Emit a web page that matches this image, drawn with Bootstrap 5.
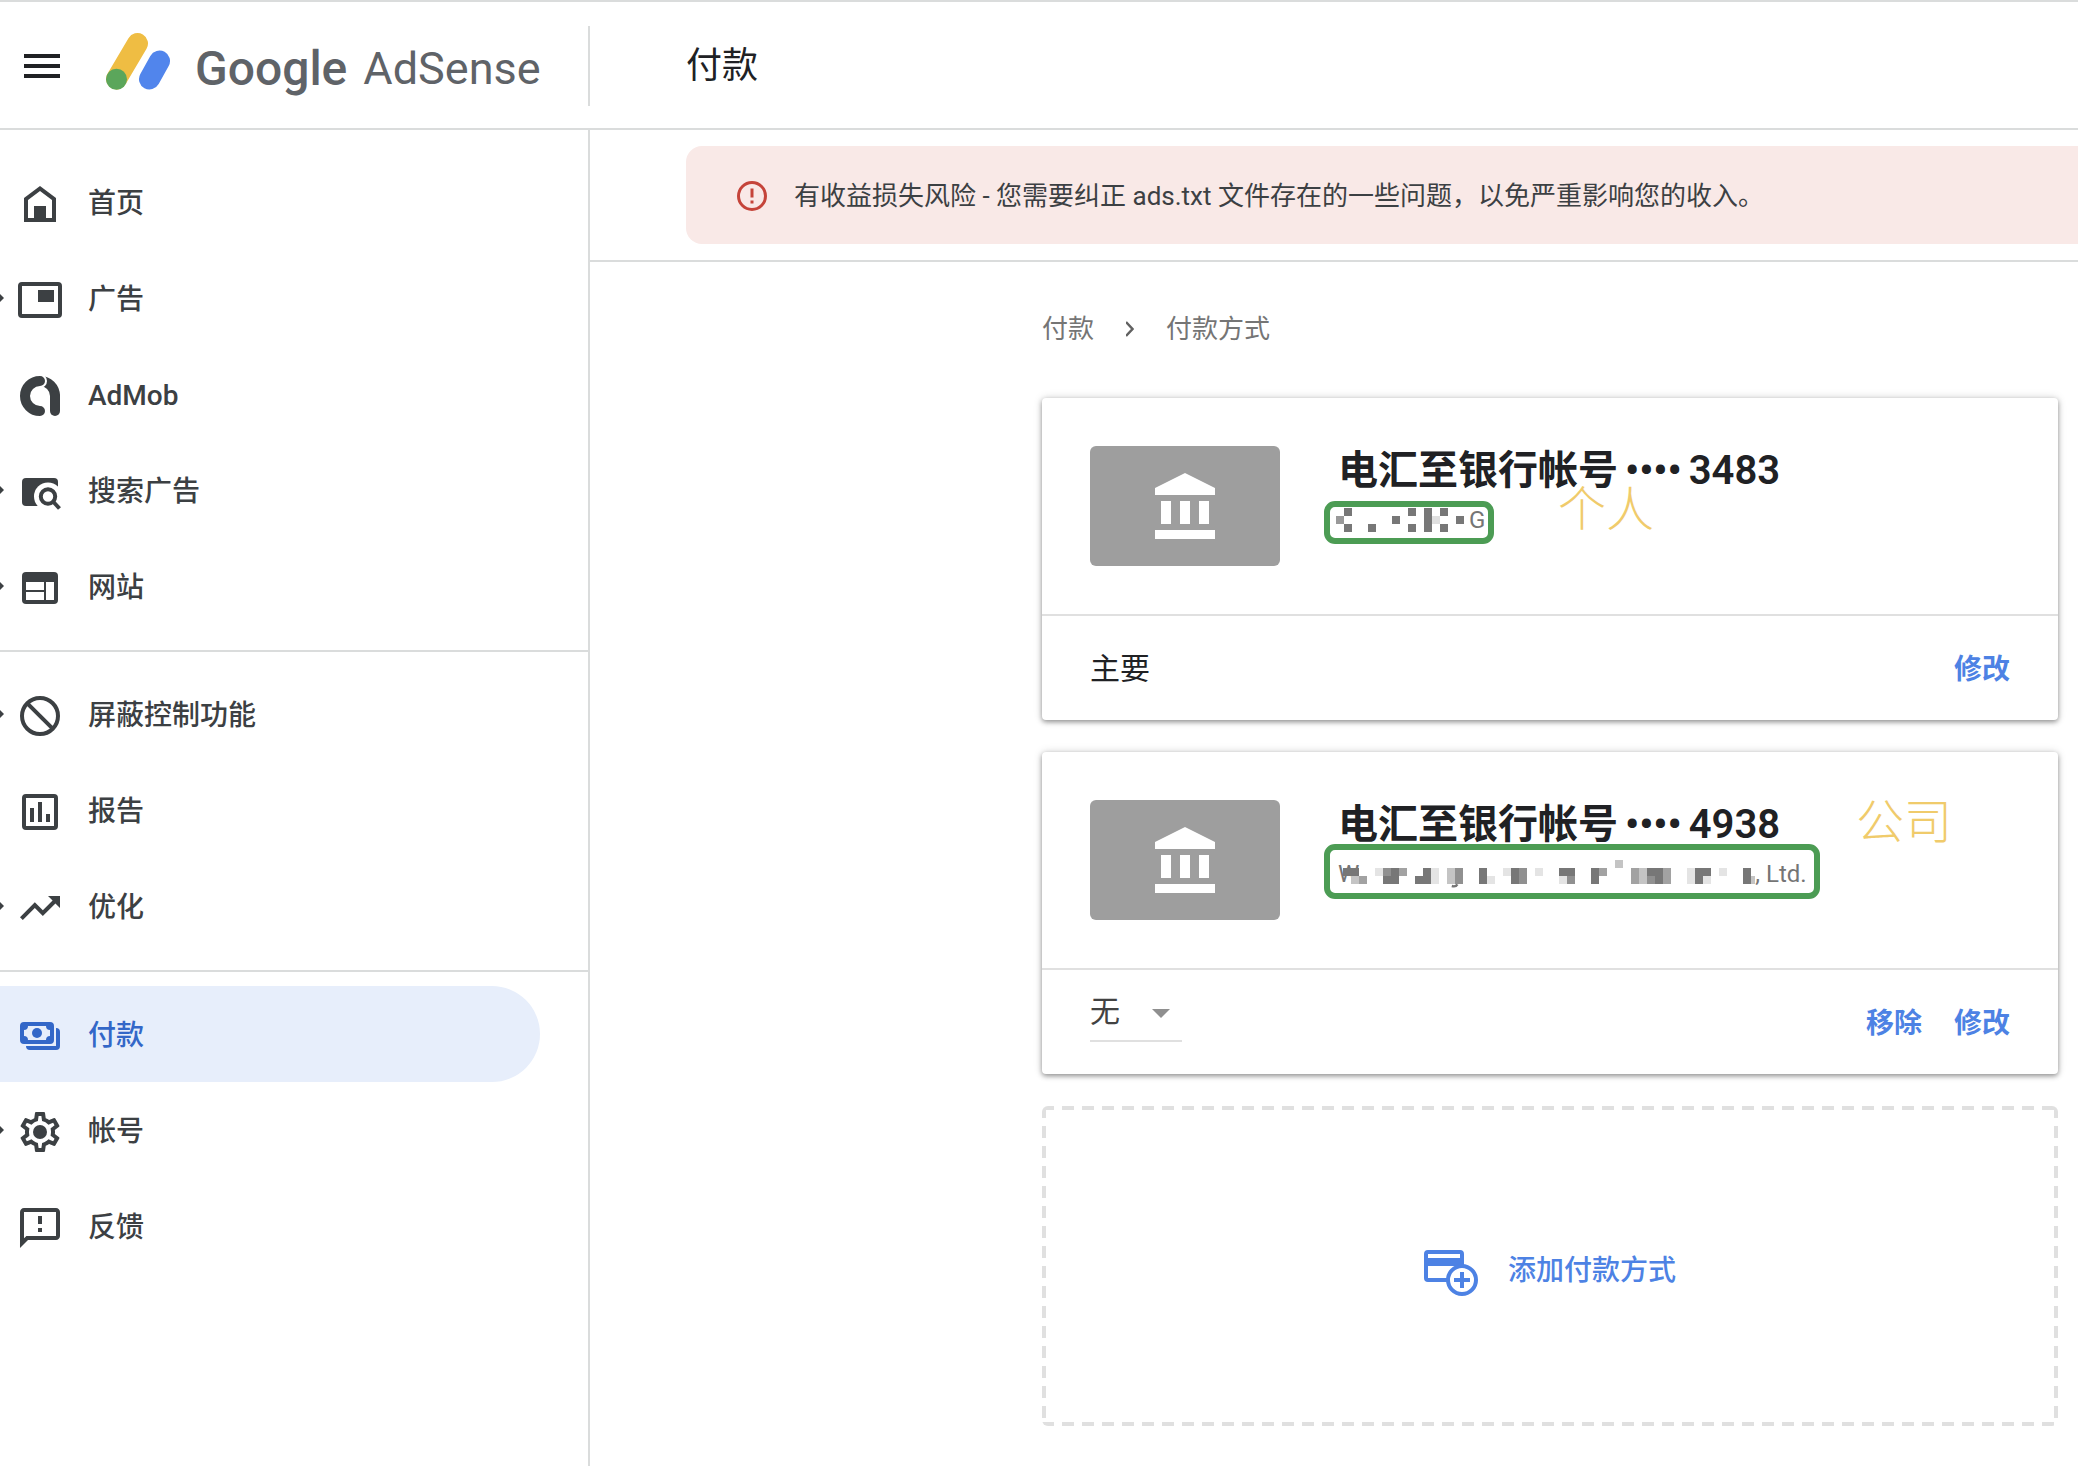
<!DOCTYPE html>
<html lang="zh-CN">
<head>
<meta charset="utf-8">
<meta name="viewport" content="width=device-width, initial-scale=1">
<title>Google AdSense - 付款</title>
<link href="https://cdn.jsdelivr.net/npm/bootstrap@5.3.0/dist/css/bootstrap.min.css" rel="stylesheet">
<style>
  :root { --line: #dadcdc; --ink: #3c4043; --link: #4d82e4; }
  body { font-family: Roboto, "Noto Sans CJK SC", sans-serif; color: #202124; background: #fff; }
  svg { display: block; flex: none; }
  a { text-decoration: none; }
  .topbar { border-top: 2px solid var(--line); border-bottom: 2px solid var(--line); height: 130px; padding-top: 2px; }
  .brand-area { width: 590px; height: 80px; border-right: 2px solid var(--line); padding-left: 24px; }
  .menu-btn { width: 36px; height: 36px; }
  .brand-link { color: #5f6368; margin-left: 45px; line-height: 60px; }
  .brand-google { font-size: 48px; font-weight: 500; padding-top: 6px; }
  .brand-product { font-size: 45px; padding-top: 6px; }
  .page-title { font-size: 36px; line-height: 48px; font-weight: 400; padding-left: 96px; }
  .side { width: 590px; border-right: 2px solid var(--line); padding-top: 10px; }
  .side-group { padding: 14px 0 16px; }
  .side-group + .side-group { border-top: 2px solid var(--line); }
  .side-link { height: 96px; margin-right: 48px; font-size: 28px; font-weight: 500; color: var(--ink); border-radius: 0 48px 48px 0; padding-left: 0; }
  .side-link svg { margin-top: 4px; }
  .side-link span { padding-top: 3px; }
  .side-link::before { content: ""; width: 16px; border: 0 solid transparent; }
  .side-link.expands::before { width: 4px; margin-right: 12px; border-width: 4px 0 4px 4px; border-left-color: var(--ink); }
  .side-link.active { background: #e7eefb; color: #3367c8; }
  .notice-row { border-bottom: 2px solid var(--line); padding: 16px 0 16px 96px; }
  .notice { background: #f9e9e7; border-radius: 16px 0 0 16px; height: 98px; padding: 2px 0 0 50px; gap: 26px; font-size: 26px; color: #3c4043; }
  .content { padding: 45px 20px 32px 452px; }
  .crumbs { font-size: 26px; line-height: 44px; gap: 32px; margin-bottom: 47px; color: #757575; }
  .crumbs a { color: inherit; }
  .pay-card { border: 0; border-radius: 4px; margin-bottom: 32px; box-shadow: 0 2px 5px rgba(0,0,0,.38), 0 0 10px rgba(0,0,0,.14); }
  .pay-main { padding: 48px; height: 216px; gap: 58px; }
  .thumb { width: 190px; height: 120px; border-radius: 6px; background: #9e9e9e; }
  .pay-name { font-size: 40px; line-height: 50px; font-weight: 600; margin: 0; gap: 7px; }
  .pay-holder { font-size: 24px; line-height: 32px; margin-top: 8px; color: #757575; height: 32px; }
  .mosaic-person { margin-left: -2px; margin-right: 5px; }
  .mosaic-company { margin-left: -16px; }
  .pay-foot { border-top: 2px solid #e0e0e0; height: 106px; padding: 0 48px; font-size: 30px; }
  .act { font-size: 28px; font-weight: 700; color: var(--link); line-height: 40px; padding-top: 3px; }
  .pref { appearance: none; border: 0; border-bottom: 2px solid #e0e0e0; border-radius: 0; width: 92px; height: 60px; padding: 0; font-size: 30px; color: #424242; background: transparent; }
  .pref-wrap svg { position: absolute; left: 62px; top: 27px; pointer-events: none; }
  .ring { position: absolute; border: 6px solid #4c9c54; border-radius: 11px; }
  .ring-person { left: 282px; top: 103px; width: 170px; height: 43px; }
  .ring-company { left: 282px; top: 92px; width: 496px; height: 55px; }
  .scribble { position: absolute; font-size: 48px; line-height: 56px; font-weight: 300; color: #f0cb6b; }
  .scribble-person { left: 516px; top: 84px; }
  .scribble-company { left: 814px; top: 43px; }
  .add-box { border: 0; border-radius: 6px; height: 320px; gap: 30px; padding-top: 10px; color: var(--link); font-size: 28px; font-weight: 500;
    --h: repeating-linear-gradient(90deg, #e0e0e0 0 12px, transparent 12px 20px);
    --v: repeating-linear-gradient(180deg, #e0e0e0 0 12px, transparent 12px 20px);
    background: var(--h) top/100% 4px no-repeat, var(--h) bottom/100% 4px no-repeat, var(--v) left/4px 100% no-repeat, var(--v) right/4px 100% no-repeat; }
</style>
<script src="https://cdn.jsdelivr.net/npm/bootstrap@5.3.0/dist/js/bootstrap.bundle.min.js"></script>
</head>
<body>
<div class="d-flex flex-column min-vh-100 overflow-hidden">
  <header class="topbar d-flex align-items-center">
    <div class="brand-area d-flex align-items-center flex-shrink-0">
      <button class="menu-btn btn p-0 border-0" type="button" aria-label="主菜单">
        <svg width="36" height="36" viewBox="0 0 36 36" fill="#202124"><path d="M0 6h36v4H0zM0 16h36v4H0zM0 26h36v4H0z"/></svg>
      </button>
      <a class="brand-link d-flex align-items-center" href="#">
        <svg class="mb-2" width="66" height="60" viewBox="105 32 66 60" fill="none" stroke-width="21" stroke-linecap="round"><path d="M137.500 43.500L116.500 79" stroke="#efbd43"/><path d="M116.500 79.200v.1" stroke="#5ba65b"/><path d="M159.500 61L149.500 79" stroke="#5185ec"/></svg>
        <span class="brand-google ms-4">Google</span><span class="brand-product ms-3">AdSense</span>
      </a>
    </div>
    <h1 class="page-title m-0">付款</h1>
  </header>

  <div class="d-flex flex-grow-1">
    <nav class="side flex-shrink-0" aria-label="主导航">
      <div class="side-group">
        <a class="side-link d-flex align-items-center" href="#">
          <svg width="48" height="48" viewBox="0 0 24 24" fill="currentColor"><path fill-rule="evenodd" d="M12 3L4 9v12h16V9zM6 10l6-4.500L18 10v9H6z"/><path d="M9 13h6v6.500H9z"/></svg>
          <span class="ms-4">首页</span></a>
        <a class="side-link expands d-flex align-items-center" href="#">
          <svg width="48" height="48" viewBox="0 0 24 24" fill="currentColor"><rect x="2" y="4" width="20" height="16" rx="1" fill="none" stroke="currentColor" stroke-width="2"/><path d="M11 7h8v6h-8z"/></svg>
          <span class="ms-4">广告</span></a>
        <a class="side-link d-flex align-items-center" href="#">
          <svg width="48" height="48" viewBox="0 0 48 48" fill="none" stroke="currentColor" stroke-width="10"><path d="M24 9a15 15 0 0 1 15 15v4"/><path d="M39 24v15" stroke-linecap="round"/><circle cx="24" cy="9" r="7" fill="#fff" stroke="none"/><path d="M19 0h11.500v4H19z" fill="#fff" stroke="none"/><path d="M24 9a15 15 0 0 0 0 30" stroke-linecap="round"/></svg>
          <span class="ms-4">AdMob</span></a>
        <a class="side-link expands d-flex align-items-center" href="#">
          <svg width="48" height="48" viewBox="0 0 48 48"><rect x="6" y="10" width="36" height="28" rx="4" fill="currentColor"/><circle cx="32" cy="28.500" r="14" fill="#fff"/><path d="M32 28h12v14H32z" fill="#fff"/><circle cx="32" cy="28.500" r="7.200" fill="none" stroke="currentColor" stroke-width="4"/><path d="M37 33.500l6.500 7" stroke="currentColor" stroke-width="4"/></svg>
          <span class="ms-4">搜索广告</span></a>
        <a class="side-link expands d-flex align-items-center" href="#">
          <svg width="48" height="48" viewBox="0 0 48 48"><rect x="6" y="8" width="36" height="32" rx="4" fill="currentColor"/><path d="M10 18h18v8H10zM10 28h18v8H10zM30 18h8v18h-8z" fill="#fff"/></svg>
          <span class="ms-4">网站</span></a>
      </div>
      <div class="side-group">
        <a class="side-link expands d-flex align-items-center" href="#">
          <svg width="48" height="48" viewBox="0 0 48 48" fill="none" stroke="currentColor" stroke-width="4"><circle cx="24" cy="24" r="18"/><path d="M11.300 11.300l25.400 25.400"/></svg>
          <span class="ms-4">屏蔽控制功能</span></a>
        <a class="side-link d-flex align-items-center" href="#">
          <svg width="48" height="48" viewBox="0 0 48 48" fill="currentColor"><rect x="8" y="8" width="32" height="32" rx="2" fill="none" stroke="currentColor" stroke-width="4"/><path d="M14 20h4v14h-4zM22 14h4v20h-4zM30 26h4v8h-4z"/></svg>
          <span class="ms-4">报告</span></a>
        <a class="side-link expands d-flex align-items-center" href="#">
          <svg width="48" height="48" viewBox="0 0 24 24" fill="currentColor"><path d="M16 6l2.290 2.290-4.880 4.880-4-4L2 16.590 3.410 18l6-6 4 4 6.300-6.290L22 12V6z"/></svg>
          <span class="ms-4">优化</span></a>
      </div>
      <div class="side-group">
        <a class="side-link active d-flex align-items-center" href="#" aria-current="page">
          <svg width="48" height="48" viewBox="0 0 48 48" fill="currentColor"><path fill-rule="evenodd" d="M8 10h26a4 4 0 0 1 4 4v14a4 4 0 0 1-4 4H8a4 4 0 0 1-4-4V14a4 4 0 0 1 4-4zM12 14a4 4 0 0 1-4 4v6a4 4 0 0 1 4 4h18a4 4 0 0 1 4-4v-6a4 4 0 0 1-4-4z"/><circle cx="21" cy="21" r="5"/><path d="M40 16a4 4 0 0 1 4 4v14a4 4 0 0 1-4 4H14a4 4 0 0 1-4-4h30z"/></svg>
          <span class="ms-4">付款</span></a>
        <a class="side-link expands d-flex align-items-center" href="#">
          <svg width="48" height="48" viewBox="0 0 24 24" fill="currentColor"><path d="M19.430 12.980c.04-.32.07-.64.07-.98 0-.34-.03-.66-.07-.98l2.110-1.650c.19-.15.24-.42.12-.64l-2-3.460c-.09-.16-.26-.25-.44-.25-.06 0-.12.01-.17.03l-2.490 1c-.52-.4-1.080-.73-1.690-.98l-.38-2.650C14.460 2.180 14.250 2 14 2h-4c-.25 0-.46.18-.49.42l-.38 2.650c-.61.25-1.170.59-1.690.98l-2.490-1c-.06-.02-.12-.03-.18-.03-.17 0-.34.09-.43.25l-2 3.460c-.13.22-.07.49.12.64l2.110 1.650c-.04.32-.07.65-.07.98 0 .33.03.66.07.98l-2.110 1.650c-.19.15-.24.42-.12.64l2 3.460c.09.16.26.25.44.25.06 0 .12-.01.17-.03l2.490-1c.52.4 1.080.73 1.690.98l.38 2.650c.03.24.24.42.49.42h4c.25 0 .46-.18.49-.42l.38-2.650c.61-.25 1.170-.59 1.690-.98l2.490 1c.06.02.12.03.18.03.17 0 .34-.09.43-.25l2-3.460c.12-.22.07-.49-.12-.64l-2.110-1.650zm-1.980-1.710c.04.31.05.52.05.73 0 .21-.02.43-.05.73l-.14 1.130.89.7 1.080.84-.7 1.210-1.270-.51-1.040-.42-.9.68c-.43.32-.84.56-1.250.73l-1.060.43-.16 1.130-.2 1.350h-1.400l-.19-1.350-.16-1.130-1.060-.43c-.43-.18-.83-.41-1.230-.71l-.91-.7-1.060.43-1.270.51-.7-1.210 1.080-.84.89-.7-.14-1.130c-.03-.31-.05-.54-.05-.74s.02-.43.05-.73l.14-1.130-.89-.7-1.080-.84.7-1.210 1.270.51 1.040.42.9-.68c.43-.32.84-.56 1.250-.73l1.060-.43.16-1.130.2-1.350h1.390l.19 1.350.16 1.130 1.060.43c.43.18.83.41 1.230.71l.91.7 1.060-.43 1.270-.51.7 1.210-1.070.85-.89.7.14 1.130z"/><circle cx="12" cy="12" r="3.500"/></svg>
          <span class="ms-4">帐号</span></a>
        <a class="side-link d-flex align-items-center" href="#">
          <svg width="48" height="48" viewBox="0 0 24 24" fill="currentColor"><path d="M20 2H4c-1.100 0-1.990.9-1.990 2L2 22l4-4h14c1.100 0 2-.9 2-2V4c0-1.100-.9-2-2-2zm0 14H5.170l-.59.59-.58.58V4h16v12zm-9-4h2v2h-2zm0-6h2v4h-2z"/></svg>
          <span class="ms-4">反馈</span></a>
      </div>
    </nav>

    <main class="flex-grow-1">
      <div class="notice-row">
        <div class="notice d-flex align-items-center" role="alert">
          <svg width="32" height="32" viewBox="0 0 32 32" fill="none" stroke="#c5443a" stroke-width="3"><circle cx="16" cy="16" r="13.500"/><path d="M16 8.500v9M16 20.500v3"/></svg>
          <span>有收益损失风险 - 您需要纠正 ads.txt 文件存在的一些问题，以免严重影响您的收入。</span>
        </div>
      </div>
      <div class="content">
        <nav class="crumbs d-flex align-items-center" aria-label="面包屑导航">
          <a href="#">付款</a>
          <svg width="8" height="16" viewBox="0 0 8 16" fill="none" stroke="#616161" stroke-width="2.500"><path d="M0 1l6.500 7L0 15"/></svg>
          <span>付款方式</span>
        </nav>

        <section class="pay-card card">
          <div class="pay-main d-flex">
            <div class="thumb d-flex align-items-center justify-content-center flex-shrink-0">
              <svg width="60" height="66" viewBox="0 0 60 66" fill="#fff"><path d="M30 0l30 15v7H0v-7zM6 28h10v23H6zM25 28h10v23H25zM44 28h10v23H44zM0 57h60v9H0z"/></svg>
            </div>
            <div>
              <h2 class="pay-name d-flex text-nowrap"><span>电汇至银行帐号</span> <span>••••</span> <span>3483</span></h2>
              <div class="pay-holder d-flex align-items-center">
                <svg class="mosaic-person" width="128" height="24" viewBox="0 0 16 3" fill="#777" shape-rendering="crispEdges"><path d="M1 0h1v1H1zM9 0h1v1H9zM11 0h1v3h-1zM13 0h1v1h-1zM7 1h1v1H7zM15 1h1v1h-1zM1 2h1v1H1zM4 2h1v1H4zM9 2h1v1H9zM13 2h1v1h-1z"/><path d="M0 1h1v1H0z" fill="#999"/><path d="M12 1h1v1h-1z" fill="#e0e0e0"/></svg>
                <span>G</span>
              </div>
            </div>
          </div>
          <div class="pay-foot d-flex align-items-center justify-content-between">
            <span>主要</span>
            <a class="act" href="#">修改</a>
          </div>
          <span class="ring ring-person"></span>
          <span class="scribble scribble-person">个人</span>
        </section>

        <section class="pay-card card">
          <div class="pay-main d-flex">
            <div class="thumb d-flex align-items-center justify-content-center flex-shrink-0">
              <svg width="60" height="66" viewBox="0 0 60 66" fill="#fff"><path d="M30 0l30 15v7H0v-7zM6 28h10v23H6zM25 28h10v23H25zM44 28h10v23H44zM0 57h60v9H0z"/></svg>
            </div>
            <div>
              <h2 class="pay-name d-flex text-nowrap"><span>电汇至银行帐号</span> <span>••••</span> <span>4938</span></h2>
              <div class="pay-holder d-flex align-items-center">
                <span>W</span>
                <svg class="mosaic-company" width="412" height="32" viewBox="0 -1.250 51.500 4" shape-rendering="crispEdges"><path fill="#777" d="M0 0h2v1H0zM6 0h1v1H6zM5 1h2v1H5zM10 0h1v2h-1zM9 1h1v1H9zM17 0h1v2h-1zM21 0h1v2h-1zM27 0h2v1h-2zM31 0h1v2h-1zM38 0h2v1h-2zM39 1h1v1h-1zM44 0h2v1h-2zM44 1h1v1h-1zM50 0h1v2h-1z"/><path fill="#909090" d="M5 0h1v1H5zM14 0h1v2h-1zM22 0h1v2h-1zM28 1h1v1h-1zM38 1h1v1h-1z"/><path fill="#a2a2a2" d="M2 1h1v1H2zM7 0h1v1H7zM32 0h1v1h-1zM36 0h1v2h-1zM40 0h1v2h-1z"/><path fill="#c4c4c4" d="M1 1h1v1H1zM13 0h1v2h-1zM34-1h1v1h-1zM37 0h1v2h-1zM51 1h1v1h-1z"/><path fill="#e4e4e4" d="M4 0h1v1H4zM11 0h1v2h-1zM20 0h1v1h-1zM24 0h1v1h-1zM27 1h1v1h-1zM43 0h1v2h-1zM45 1h1v1h-1zM47 0h1v1h-1zM18 1h1v1h-1z"/><path fill="none" stroke="#757575" stroke-width=".3" shape-rendering="auto" d="M14.300 2.050q-.2.350-.7.200"/></svg>
                <span>, Ltd.</span>
              </div>
            </div>
          </div>
          <div class="pay-foot d-flex justify-content-between">
            <div class="pref-wrap position-relative mt-2 pt-1">
              <select class="pref" aria-label="偏好设置"><option>无</option></select>
              <svg class="mt-1" width="18" height="9" viewBox="0 0 18 9" fill="#8f8f8f"><path d="M0 0h18L9 9z"/></svg>
            </div>
            <div class="d-flex align-items-center">
              <a class="act" href="#">移除</a>
              <a class="act ms-4 ps-2" href="#">修改</a>
            </div>
          </div>
          <span class="ring ring-company"></span>
          <span class="scribble scribble-company">公司</span>
        </section>

        <button class="add-box w-100 d-flex align-items-center justify-content-center" type="button">
          <svg class="mt-1" width="54" height="46" viewBox="0 0 54 46" fill="none" stroke="currentColor" stroke-width="4"><path d="M23 30H4a2 2 0 0 1-2-2V4a2 2 0 0 1 2-2h32a2 2 0 0 1 2 2v12"/><path d="M2 12h36" stroke-width="8"/><circle cx="38" cy="30" r="14" fill="#fff"/><path d="M38 22v16M30 30h16"/></svg>
          <span>添加付款方式</span>
        </button>
      </div>
    </main>
  </div>
</div>
</body>
</html>
